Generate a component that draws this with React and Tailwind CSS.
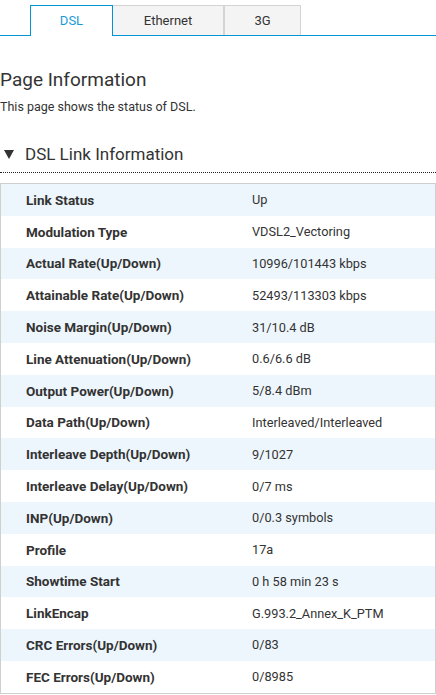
import React from 'react';

const rows = [
    ['Link Status', 'Up'],
    ['Modulation Type', 'VDSL2_Vectoring'],
    ['Actual Rate(Up/Down)', '10996/101443 kbps'],
    ['Attainable Rate(Up/Down)', '52493/113303 kbps'],
    ['Noise Margin(Up/Down)', '31/10.4 dB'],
    ['Line Attenuation(Up/Down)', '0.6/6.6 dB'],
    ['Output Power(Up/Down)', '5/8.4 dBm'],
    ['Data Path(Up/Down)', 'Interleaved/Interleaved'],
    ['Interleave Depth(Up/Down)', '9/1027'],
    ['Interleave Delay(Up/Down)', '0/7 ms'],
    ['INP(Up/Down)', '0/0.3 symbols'],
    ['Profile', '17a'],
    ['Showtime Start', '0 h 58 min 23 s'],
    ['LinkEncap', 'G.993.2_Annex_K_PTM'],
    ['CRC Errors(Up/Down)', '0/83'],
    ['FEC Errors(Up/Down)', '0/8985'],
];

export default function App() {
    return (
        <div className="w-[436px] h-[695px] overflow-hidden bg-white text-[#333] font-['Roboto','Noto_Sans',sans-serif]">
            {/* tab strip */}
            <div className="pt-[5px] flex border-b border-[#0096d6] pl-[30px]">
                <div className="w-[83px] h-[31px] -mb-px bg-white border border-b-0 border-[#0096d6] flex items-center justify-center text-[13px] text-[#1a9bd7]">
                    DSL
                </div>
                <div className="w-[111px] h-[30px] bg-[#f4f4f4] border border-b-0 border-l-0 border-[#d4d4d4] flex items-center justify-center text-[13px]">
                    Ethernet
                </div>
                <div className="w-[77px] h-[30px] bg-[#f4f4f4] border border-b-0 border-[#d4d4d4] flex items-center justify-center text-[13px]">
                    3G
                </div>
            </div>

            <h1 className="mt-[30px] text-[19px] leading-[28px]">Page Information</h1>
            <p className="mt-[5px] text-[12.5px] leading-[16px]">This page shows the status of DSL.</p>

            <div className="mt-[27px] flex items-center h-[24px] pl-[4px]">
                <svg width="10" height="9" viewBox="0 0 10 9" className="mr-[11px]">
                    <polygon points="0,0 10,0 5,9" fill="#333" />
                </svg>
                <span className="text-[17px] leading-[24px]">DSL Link Information</span>
            </div>
            <div className="mt-[6px] border-b border-dotted border-[#222]" />

            <div className="mt-[10px] border border-[#cfcfcf]">
                {rows.map(([label, value], i) => (
                    <div
                        key={label}
                        className={`h-[31.8px] flex items-center ${i % 2 === 0 ? 'bg-[#eef6fd]' : 'bg-white'}`}
                    >
                        <span className="w-[251px] pl-[25px] font-bold text-[13.5px]">{label}</span>
                        <span className="text-[12.75px]">{value}</span>
                    </div>
                ))}
            </div>
        </div>
    );
}
